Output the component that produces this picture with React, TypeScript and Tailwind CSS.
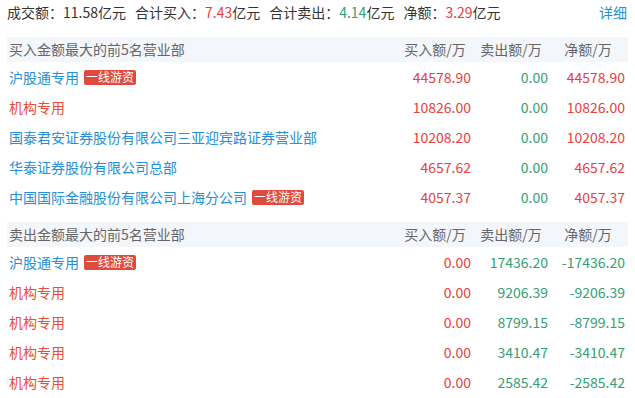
const font = { fontFamily: '"Noto Sans CJK SC", "Microsoft YaHei", sans-serif' };

interface Row {
  name: string;
  tag?: boolean;
  jigou?: boolean;
  buy: string;
  sell: string;
  net: string;
}

const buyRows: Row[] = [
  { name: "沪股通专用", tag: true, buy: "44578.90", sell: "0.00", net: "44578.90" },
  { name: "机构专用", jigou: true, buy: "10826.00", sell: "0.00", net: "10826.00" },
  { name: "国泰君安证券股份有限公司三亚迎宾路证券营业部", buy: "10208.20", sell: "0.00", net: "10208.20" },
  { name: "华泰证券股份有限公司总部", buy: "4657.62", sell: "0.00", net: "4657.62" },
  { name: "中国国际金融股份有限公司上海分公司", tag: true, buy: "4057.37", sell: "0.00", net: "4057.37" },
];

const sellRows: Row[] = [
  { name: "沪股通专用", tag: true, buy: "0.00", sell: "17436.20", net: "-17436.20" },
  { name: "机构专用", jigou: true, buy: "0.00", sell: "9206.39", net: "-9206.39" },
  { name: "机构专用", jigou: true, buy: "0.00", sell: "8799.15", net: "-8799.15" },
  { name: "机构专用", jigou: true, buy: "0.00", sell: "3410.47", net: "-3410.47" },
  { name: "机构专用", jigou: true, buy: "0.00", sell: "2585.42", net: "-2585.42" },
];

function numColor(v: string, col: "buy" | "sell" | "net") {
  if (col === "buy") return "text-[#e8403f]";
  if (col === "sell") return "text-[#34a073]";
  return v.startsWith("-") ? "text-[#34a073]" : "text-[#e8403f]";
}

function Section({ title, rows }: { title: string; rows: Row[] }) {
  return (
    <div>
      <div className="flex h-[25px] items-center bg-[#f3f6fa] pl-[2px] pr-[3px] text-[#666]">
        <div className="flex-1">{title}</div>
        <div className="w-[77px] pl-[5px] text-center">买入额/万</div>
        <div className="w-[77px] pl-[3px] text-center">卖出额/万</div>
        <div className="w-[77px] pl-[3px] text-center">净额/万</div>
      </div>
      {rows.map((r, i) => (
        <div key={i} className="flex h-[30px] items-center pl-[2px] pr-[3px]">
          <div className="flex flex-1 items-center">
            <span className={r.jigou ? "text-[#ea4c36]" : "text-[#2490d6]"}>{r.name}</span>
            {r.tag && (
              <span className="ml-[5px] flex h-[15px] items-center rounded-[2px] bg-[#e04a3c] px-[2px] text-[12px] leading-none text-white">
                一线游资
              </span>
            )}
          </div>
          <div className={`w-[77px] text-right ${numColor(r.buy, "buy")}`}>{r.buy}</div>
          <div className={`w-[77px] text-right ${numColor(r.sell, "sell")}`}>{r.sell}</div>
          <div className={`w-[77px] text-right ${numColor(r.net, "net")}`}>{r.net}</div>
        </div>
      ))}
    </div>
  );
}

export default function App() {
  return (
    <div className="h-[398px] w-[635px] overflow-hidden bg-white px-[7px] text-[14px] text-[#333]" style={font}>
      <div className="flex h-[25px] items-center">
        <div className="flex flex-1 items-center gap-[9px]">
          <span>成交额：11.58亿元</span>
          <span>
            合计买入：<span className="text-[#e8403f]">7.43</span>亿元
          </span>
          <span>
            合计卖出：<span className="text-[#34a073]">4.14</span>亿元
          </span>
          <span>
            净额：<span className="text-[#e8403f]">3.29</span>亿元
          </span>
        </div>
        <span className="pr-[1px] text-[#2490d6]">详细</span>
      </div>
      <div className="mt-[12px]">
        <Section title="买入金额最大的前5名营业部" rows={buyRows} />
      </div>
      <div className="mt-[10px]">
        <Section title="卖出金额最大的前5名营业部" rows={sellRows} />
      </div>
    </div>
  );
}
